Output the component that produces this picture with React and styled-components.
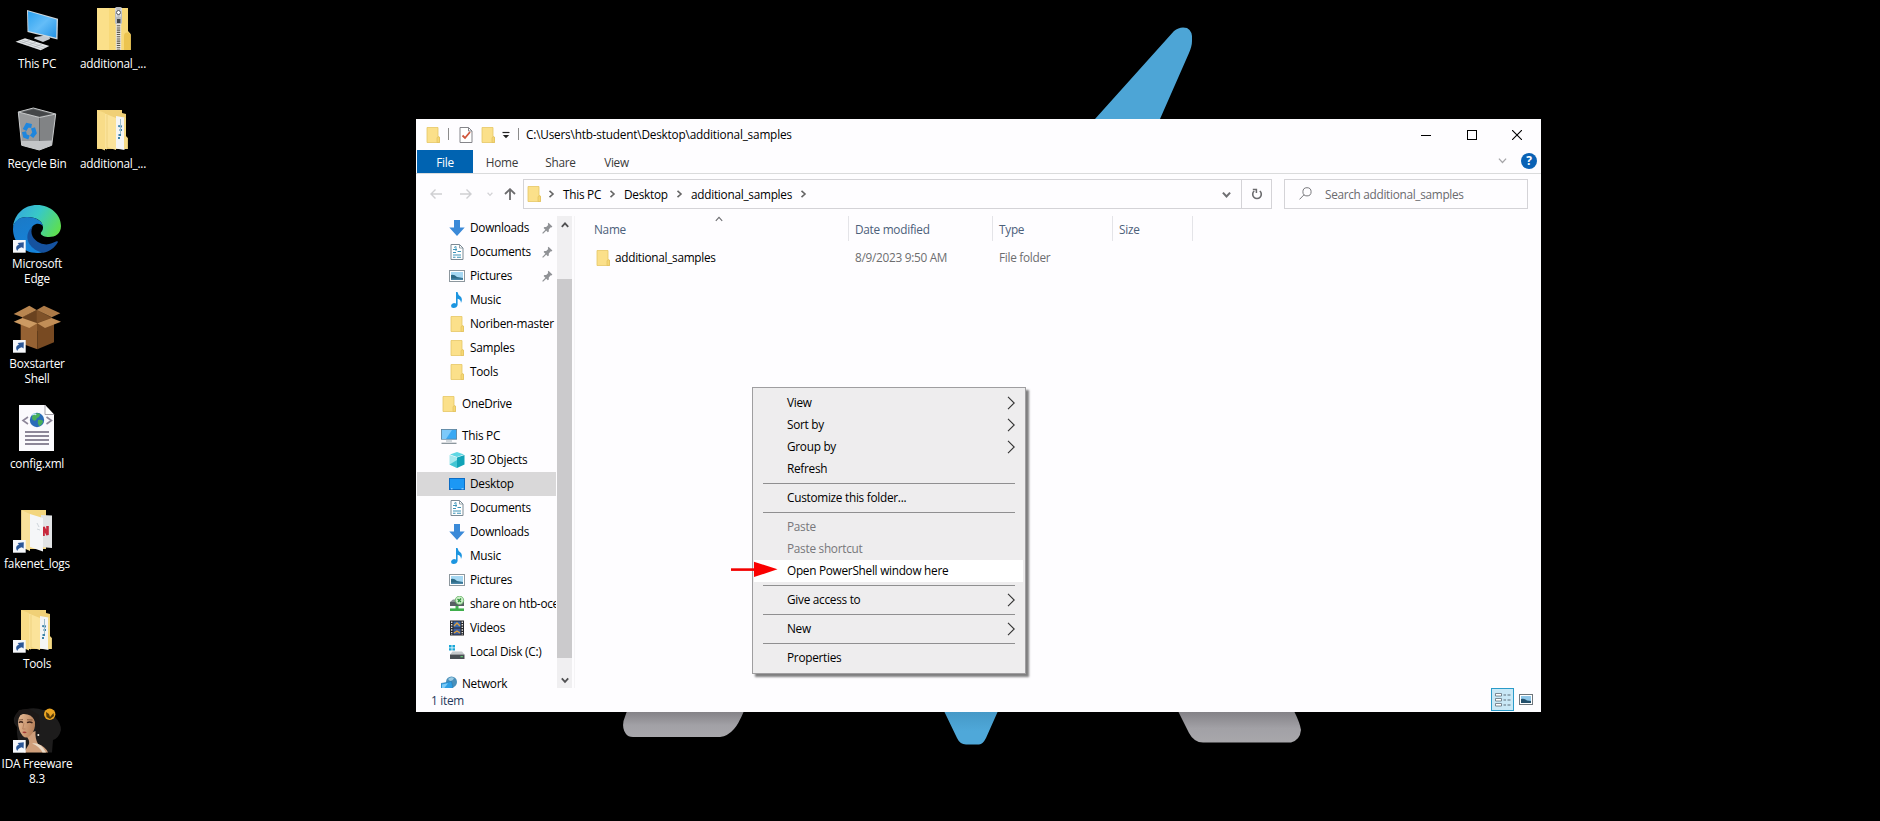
import React from "react";
import styled, { createGlobalStyle, css } from "styled-components";

const GlobalStyle = createGlobalStyle`
  * { box-sizing: border-box; }
  html, body { margin: 0; padding: 0; background: #000; overflow: hidden; }
  body {
    font-family: "Open Sans", "Noto Sans", "Liberation Sans", sans-serif;
    font-size: 11.8px;
    letter-spacing: -0.26px;
    color: #000;
  }
  svg { display: block; flex: none; }
`;

/* ---------- desktop ---------- */

const Desktop = styled.main`
  position: relative;
  width: 1880px;
  height: 821px;
  overflow: hidden;
  background: #000;
`;

const Wallpaper = styled.svg`
  position: absolute;
  inset: 0;
`;

const IconGrid = styled.div`
  position: relative;
  display: grid;
  grid-template-rows: repeat(8, 100px);
  grid-auto-columns: 76px;
  grid-auto-flow: column;
  width: max-content;
  margin-left: -1px;
`;

const Shortcut = styled.div`
  grid-column: ${(p) => p.$col};
  grid-row: ${(p) => p.$row};
  display: flex;
  flex-direction: column;
  align-items: center;
  padding-top: 5px;
  gap: 3px;
`;

const ShortcutLabel = styled.span`
  width: 76px;
  color: #fff;
  line-height: 15px;
  text-align: center;
  letter-spacing: -0.24px;
  text-shadow: 0 1px 2px #000;
  white-space: pre;
`;

const Badge = () => (
  <g>
    <rect x="0" y="35" width="12.7" height="12.7" fill="#f6f8fb" />
    <path d="M4.2 46 C2.2 43 3.4 40.4 6 39.6 L4.6 37.9 L10.8 37.2 L10.6 43.6 L8.8 42.2 C6.6 42.6 5.2 43.8 4.2 46Z" fill="#2b5797" />
  </g>
);

const Ico = ({ children, link }) => (
  <svg width="48" height="48" viewBox="0 0 48 48">
    {children}
    {link && <Badge />}
  </svg>
);

const PcIcon = () => (
  <Ico>
    <defs>
      <linearGradient id="scr" x1="0" y1="0" x2="1" y2="1">
        <stop offset="0" stopColor="#2aa1f0" />
        <stop offset=".5" stopColor="#64bdf8" />
        <stop offset="1" stopColor="#2393e6" />
      </linearGradient>
    </defs>
    <path d="M22 32 L36 30 L37 34 L30 37 L21 33.5Z" fill="#c4cad0" />
    <path d="M14 5 L45 13.8 L44.5 34.5 L14.5 27Z" fill="#cfd8de" />
    <path d="M15 6.2 L43.6 14.5 L43.2 32.8 L15.4 26Z" fill="url(#scr)" />
    <path d="M12 33.3 L36.3 41 L27.7 45.3 L2.5 36.8Z" fill="#e3e6e8" />
    <path d="M9 35 L33 42.6 M6 36 L30 44 M17 35 L8 38.5 M23 37 L14 40.6 M29 39 L20 42.6" stroke="#a8adb2" strokeWidth=".6" />
  </Ico>
);

const ZipIcon = () => (
  <Ico>
    <path d="M8 3 H39 V26 L41.7 29 V45 H8Z" fill="#f8d978" />
    <path d="M8 3 H20 V45 H8Z" fill="#fbe08a" />
    <path d="M35 45 V31 Q35 27.5 38 27.5 H39.5 L41.7 30 V45Z" fill="#ecc450" />
    <path d="M29.5 18 V45" stroke="#e8e4da" strokeWidth="5.4" />
    <path d="M29.5 18 V45" stroke="#5b564a" strokeWidth="3.4" strokeDasharray="1.1 1.1" />
    <rect x="26" y="2" width="7" height="17" rx="1.5" fill="#b9bcc0" />
    <path d="M26.6 3 L28 12 M32.4 3 L31 12" stroke="#e6e8ea" strokeWidth="1" />
    <circle cx="29.5" cy="7.5" r="2" fill="#fff" stroke="#55585c" strokeWidth="1" />
    <rect x="28" y="14" width="3.4" height="4" fill="#3f4246" />
  </Ico>
);

const BinIcon = () => (
  <Ico>
    <path d="M5.3 7 L20.3 3 L42.7 9 L26.5 12.5Z" fill="#5e6163" />
    <path d="M8 7.6 L20.5 4.4 L38 9 L26 11.4Z" fill="#444648" />
    <path d="M5.3 7 L26.5 12.5 L26.3 45 L8.7 40.3Z" fill="#989a9c" />
    <path d="M42.7 9 L26.5 12.5 L26.3 45 L38.7 40.3Z" fill="#818385" />
    <path d="M8.2 36 L26.4 36 L38.9 35.5 L38.7 40.3 L26.3 45 L8.7 40.3Z" fill="#c3c5c7" />
    <path d="M5.3 7 L20.3 3 L42.7 9 L26.5 12.5Z M5.3 7 L8.7 40.3 L26.3 45 L38.7 40.3 L42.7 9" fill="none" stroke="#c9cbcc" strokeWidth="1" />
    <g fill="none" stroke="#1f86dd" strokeWidth="4.2">
      <path d="M11.6 25 L14.3 20.2 L18.6 21" />
      <path d="M20 22.8 L21.6 27.8 L18.6 31.8" />
      <path d="M16 32.4 L12 31 L11 26.8" />
    </g>
  </Ico>
);

const OpenFolder = () => (
  <g>
    <path d="M8 5 H33 V8 L37 9 V31 L38.7 33 V44 H8Z" fill="#f0d077" />
    <path d="M27 11 L35.5 12.5 V45 L27 43.5Z" fill="#f4f5f5" />
    <path d="M29.2 21 L33 21.5 M30.5 25 H33 M29.5 30 H32 M29 33 H31" stroke="#3c83a8" strokeWidth="1.8" />
    <path d="M31.5 14 V29" stroke="#9dbccb" />
    <path d="M35 13 L37 13 V32 L38.7 33 V44 L35 44Z" fill="#f5da86" />
    <path d="M8 5.5 L27 13 V45 L18 42 V44.5 L8 40.5Z" fill="#fbe39a" />
    <path d="M18 10 V43" stroke="#edcf7b" strokeWidth=".8" />
    <path d="M8 5 L16 8 V45.5 L8 42Z" fill="#f8dc88" />
  </g>
);

const EdgeIcon = () => (
  <Ico link>
    <defs>
      <linearGradient id="eg" x1="0" y1=".3" x2="1" y2=".7">
        <stop offset="0" stopColor="#35a9dc" />
        <stop offset=".45" stopColor="#38c9c6" />
        <stop offset="1" stopColor="#5fdf4d" />
      </linearGradient>
      <linearGradient id="eb" x1="0" y1="0" x2=".4" y2="1">
        <stop offset="0" stopColor="#1b79c5" />
        <stop offset="1" stopColor="#1583da" />
      </linearGradient>
    </defs>
    <path d="M0 22 C1.5 9 11 0 24 0 C38 0 48 10 48 21 C48 29 42 32 36 32 C32 32 27.5 30.5 27.8 28 C28 26.8 30 26 30 22.5 C30 16 23 12 14 12 C6 12 1.5 17 0 22Z" fill="url(#eg)" />
    <path d="M0 24 C0 16.5 6 12 14 12 C23 12 29 16 30 21 C26 17 19 18.5 17.5 26 C16 36 23 45 32 46.6 C29 48 26 48 24 48 C10 48 0 37 0 24Z" fill="url(#eb)" />
    <path d="M19.5 22 C16.5 28 20 35 27 38 C34 41 39 38.5 43.5 36.3 C44.5 36 45.3 36.6 44.7 37.6 C41.5 43 36 47 30.5 47.7 C20 46 12 37 15 28 C16 25 17.5 23 19.5 22Z" fill="#15529f" />
  </Ico>
);

const BoxIcon = () => (
  <Ico link>
    <path d="M9 12 L23.7 5 L38.7 12.3 L38.7 20 L24.3 26 L9 20Z" fill="#6a421f" />
    <path d="M23.7 5 V18 L38.7 13Z" fill="#7f5229" />
    <path d="M.7 9 L16.3 .7 L23.7 5 L9.3 12.3Z" fill="#b98650" />
    <path d="M23.7 5 L31 .7 L47.3 8.3 L38.7 12.3Z" fill="#ad7a47" />
    <path d="M7.7 18 L24.3 18.3 V44.3 L7.7 38.3Z" fill="#966233" />
    <path d="M24.3 18.3 L41 18 V37.3 L24.3 44.3Z" fill="#784a22" />
    <path d="M.7 16.7 L9.3 13 L24.3 18.3 L16.3 23Z" fill="#cc9a62" />
    <path d="M24.3 18.3 L38.7 13 L48 16.7 L32 23Z" fill="#c28e57" />
  </Ico>
);

const XmlIcon = () => (
  <Ico>
    <path d="M6 0 H32 L41 9.5 V46 H6Z" fill="#fbfafd" />
    <path d="M32 0 V9.5 H41" fill="#fff" stroke="#8f8b96" strokeWidth=".8" />
    <path d="M15 12 L10 15.5 L15 19 M33.5 12 L38.5 15.5 L33.5 19" fill="none" stroke="#8d8699" strokeWidth="1.6" />
    <circle cx="24" cy="15" r="7.2" fill="#2a6cb8" />
    <path d="M20 10 Q24 7 27 9 Q27 12 24 13 Q23 17 20 15 Q18 13 20 10Z M25 15 Q30 14 30 17 Q28 21 26 21 Q24 18 25 15Z" fill="#49b05a" />
    <path d="M19 10 Q22 8 23 10" stroke="#bfe6f5" strokeWidth="1.4" fill="none" />
    <path d="M12 27 H36 M12 31 H36 M12 35 H36 M12 39 H36" stroke="#8d8798" strokeWidth="1.8" />
  </Ico>
);

const LogsIcon = () => (
  <Ico link>
    <path d="M8.3 5 H33 V44 H8.3Z" fill="#f3d67f" />
    <path d="M28 10 L39 10.5 V43 L28 42Z" fill="#e2e4e6" />
    <path d="M30.5 31 V22 L34.5 30 V21" fill="none" stroke="#c8283c" strokeWidth="2.6" />
    <path d="M17 9 L30 13 V46.5 L17 42Z" fill="#f5f6f8" />
    <path d="M24 18 L26 22 M24 24 L27 25" stroke="#cfd5da" />
    <path d="M8.3 5 L17 9 V46 L8.3 42Z" fill="#fae29a" />
  </Ico>
);

const IdaIcon = () => (
  <Ico link>
    <defs>
      <linearGradient id="skin" x1="0" y1="0" x2="1" y2=".3">
        <stop offset="0" stopColor="#e8bd98" />
        <stop offset="1" stopColor="#b9825c" />
      </linearGradient>
    </defs>
    <path d="M1 13 Q4 4 14 4 Q22 2 30 5 Q38 4 42 12 Q48 18 48 25 Q46 33 40 35 L39 47.5 H8 Q3 30 4 22 Q0 18 1 13Z" fill="#1d1c1c" />
    <path d="M12.5 30 Q17 35 16 39 L11 47.5 H35 Q32 41 25 39 Q22 34 22.5 26Z" fill="#cf9f7b" />
    <path d="M5 17 Q6 7.5 13 8 Q20.5 8.5 22 17 Q22.5 25 18 30 Q13.5 34.5 9.8 31 Q5.4 26 5 17Z" fill="url(#skin)" />
    <path d="M5.8 17.6 Q8 16 10 17.6 M14 17.6 Q17 16 19.5 18" stroke="#3b2118" strokeWidth="1.5" fill="none" />
    <path d="M6 15 L10 14.6 M14 14.8 L19.5 15" stroke="#6d4630" strokeWidth=".8" />
    <path d="M11 18 L9.7 24 H12.5" stroke="#b5805e" strokeWidth=".9" fill="none" />
    <path d="M9.2 27 Q11.5 26 13.8 27.3 Q11.5 29.3 9.2 27Z" fill="#a23a36" />
    <path d="M3 20 Q4 10 10 9 Q18 8.5 21.5 15 Q23.5 20 23 30 L27 26 L26 10 L16 4 L6 5 L2 12Z" fill="#1c1817" />
    <circle cx="25.3" cy="30" r="1" fill="#f4f0e6" />
    <path d="M19 38.5 Q28 37 33 47.5 H29.5 Q26 41 19 38.5Z" fill="#eadac6" />
    <circle cx="36.7" cy="9.3" r="5.7" fill="#e9a423" />
    <path d="M33 7 L36 9 L37 12 L40.5 8 L41 11 L37 14 L33.5 12Z" fill="#543907" />
  </Ico>
);

const SHORTCUTS = [
  { label: "This PC", icon: <PcIcon />, col: 1, row: 1 },
  { label: "Recycle Bin", icon: <BinIcon />, col: 1, row: 2 },
  { label: "Microsoft\nEdge", icon: <EdgeIcon />, col: 1, row: 3 },
  { label: "Boxstarter\nShell", icon: <BoxIcon />, col: 1, row: 4 },
  { label: "config.xml", icon: <XmlIcon />, col: 1, row: 5 },
  { label: "fakenet_logs", icon: <LogsIcon />, col: 1, row: 6 },
  { label: "Tools", icon: <Ico link><OpenFolder /></Ico>, col: 1, row: 7 },
  { label: "IDA Freeware\n8.3", icon: <IdaIcon />, col: 1, row: 8 },
  { label: "additional_...", icon: <ZipIcon />, col: 2, row: 1 },
  { label: "additional_...", icon: <Ico><OpenFolder /></Ico>, col: 2, row: 2 },
];

/* ---------- small icons ---------- */

const Small = ({ children }) => (
  <svg width="16" height="16" viewBox="0 0 16 16">{children}</svg>
);

const Folder = () => (
  <Small>
    <path d="M2 .5 H13 V9.5 L14.5 10 V15.5 H2Z" fill="#fbe08a" stroke="#e6c665" strokeWidth=".8" />
    <path d="M12 15.5 V11 Q12.2 9.8 13.3 9.8 L14.5 10.5 V15.5Z" fill="#f6d874" stroke="#dfbe5c" strokeWidth=".6" />
  </Small>
);
const Downloads = () => (
  <Small><path d="M5 0 H11 V7.5 H15.7 L8 16 L.3 7.5 H5Z" fill="#3b8ad8" /></Small>
);
const Documents = () => (
  <Small>
    <path d="M2 .5 H10.5 L14 4 V15.5 H2Z" fill="#fff" stroke="#7b8a94" />
    <path d="M10.5 .5 V4 H14" fill="none" stroke="#7b8a94" strokeWidth=".8" />
    <path d="M4 5.5 H8 M4 8.5 H7 M8.5 7.5 H12 M4 11 H12 M4 13.3 H6.5 M8 13.3 H12" stroke="#3c94b8" strokeWidth="1.1" />
    <path d="M5 3.5 L7 2.5 V7" stroke="#3c94b8" strokeWidth=".9" fill="none" />
  </Small>
);
const Pictures = () => (
  <Small>
    <rect x=".5" y="2.5" width="15" height="11" fill="#fff" stroke="#8d979e" />
    <rect x="2" y="4" width="12" height="8" fill="#a6d8f3" />
    <path d="M2 7 Q5 6 8 9 L14 10 V12 H2Z" fill="#2d6a86" />
    <path d="M2 10.5 H14 V12 H2Z" fill="#4a86a8" />
  </Small>
);
const Music = () => (
  <Small>
    <path d="M7 0 H8.5 Q9 3 11.5 4.5 Q14 7 12 11 Q12 7.5 8.6 6.8 V13 Q8 16 4.5 16 Q2 16 2 13.8 Q2.2 11.5 5 11 Q6.2 11 7 11.4Z" fill="#1c95e0" />
  </Small>
);
const Monitor = () => (
  <Small>
    <rect x=".4" y="1.4" width="15.2" height="9.8" fill="#3aa9f4" stroke="#5d7f98" strokeWidth=".8" />
    <path d="M1 2 H11 L5 11 H1Z" fill="#7cc9fa" />
    <path d="M5 13 H11" stroke="#a4b2ba" />
    <path d="M.5 15.3 H15.5" stroke="#7f8c94" strokeWidth="1.2" />
  </Small>
);
const Objects3d = () => (
  <Small>
    <path d="M8 0 L15 2.5 L8 5 L1 2.5Z" fill="#5fd7e3" />
    <path d="M.5 3 L8 5.5 V16 L.5 12.5Z" fill="#a5e8ee" />
    <path d="M8 5.5 L15.5 3 V12.5 L8 16Z" fill="#11a3b7" />
    <path d="M.5 12.5 L8 8 L8 16Z" fill="#43c6d4" />
  </Small>
);
const DesktopIcon = () => (
  <Small>
    <rect x=".5" y="2.5" width="15" height="11" fill="#1c98f5" stroke="#0c6cc4" />
    <path d="M2 12.8 H3.5 M12.5 12.8 H14.5" stroke="#d6edff" strokeWidth=".8" />
  </Small>
);
const Share = () => (
  <Small>
    <path d="M1 6 L4 3.5 H13 L15 6 V9.5 H1Z" fill="#8c9396" />
    <rect x="1" y="6" width="14" height="4" fill="#585f63" />
    <circle cx="10.5" cy="4.3" r="4.2" fill="#cdeec9" stroke="#5fae60" strokeWidth=".8" />
    <path d="M8.5 3 L12 6 M9 6 L12 2.5" stroke="#2d8f3a" strokeWidth="1.2" />
    <path d="M8 10 V13" stroke="#48b354" strokeWidth="3" />
    <path d="M1 13.7 H15" stroke="#3fae4c" strokeWidth="2.6" />
  </Small>
);
const Videos = () => (
  <Small>
    <rect x="1" y=".5" width="14" height="15" fill="#26272b" />
    <path d="M2.7 1.5 V15 M13.3 1.5 V15" stroke="#e2e2e2" strokeWidth="1.4" strokeDasharray="1.4 1.2" />
    <rect x="4.5" y="1.5" width="7" height="6" fill="#3668b2" />
    <rect x="4.5" y="8.5" width="7" height="6" fill="#3f5fa0" />
    <path d="M5 6 L8 3 L11 6 M5 13 L8 11 L11 13" stroke="#e0a13a" strokeWidth="1.4" fill="none" />
  </Small>
);
const Disk = () => (
  <Small>
    <path d="M0 1 H2.6 V3.4 H0Z M3.4 1 H6 V3.4 H3.4Z M0 4.2 H2.6 V6.6 H0Z M3.4 4.2 H6 V6.6 H3.4Z" fill="#19a7d8" />
    <path d="M1 10.5 L3.5 7.5 H13 L15.5 10.5Z" fill="#c5c9cc" />
    <rect x="1" y="10.5" width="14.5" height="4.5" fill="#4a4f54" />
    <rect x="11.5" y="12.2" width="2.4" height="1" fill="#66e07a" />
  </Small>
);
const Network = () => (
  <Small>
    <circle cx="10.5" cy="6" r="5.5" fill="#4a8fb9" />
    <path d="M7 3 Q10 0 13 2 Q12 5 9 5Z" fill="#9ccbe4" />
    <path d="M0 7.5 L10.5 5.5 L12 12 L0 13.5Z" fill="#2f9fe4" stroke="#2678b2" strokeWidth=".6" />
    <path d="M1 8.5 L7 7.3 L3 12.5 H1Z" fill="#7ecbf7" />
  </Small>
);

const Chevron = ({ size = 8, dir = "right", color = "#666", weight = 1.6 }) => {
  const d = {
    right: "M2.5 .8 L6 4 L2.5 7.2",
    down: "M.8 2.3 L4 5.8 L7.2 2.3",
    up: "M.8 5.8 L4 2.3 L7.2 5.8",
  }[dir];
  return (
    <svg width={size} height={size} viewBox="0 0 8 8">
      <path d={d} fill="none" stroke={color} strokeWidth={(weight * 8) / size} />
    </svg>
  );
};

/* ---------- explorer window ---------- */

const Window = styled.section`
  position: absolute;
  left: 416px;
  top: 119px;
  width: 1125px;
  height: 593px;
  display: flex;
  flex-direction: column;
  background: #fefdff;
`;

const TitleBar = styled.header`
  height: 31px;
  display: flex;
  align-items: center;
  padding-left: 9px;
`;

const QuickDivider = styled.i`
  width: 1px;
  height: 12px;
  margin: 0 ${(p) => p.$after}px 2px ${(p) => p.$before}px;
  background: #8b8b8b;
`;

const TitleText = styled.h1`
  margin: 0 auto 0 0;
  padding-bottom: 2px;
  font-size: inherit;
  font-weight: 400;
  letter-spacing: -0.2px;
`;

const QuickItem = styled.span`
  display: flex;
  margin-right: ${(p) => p.$gap}px;
`;

const Captions = styled.div`
  display: flex;
  padding-right: 1px;
`;

const Caption = styled.button`
  width: 45.5px;
  height: 31px;
  display: flex;
  align-items: center;
  justify-content: center;
  border: 0;
  padding: 0;
  background: none;
`;

const Ribbon = styled.nav`
  height: 24px;
  display: flex;
  border-bottom: 1px solid #dadbdc;
  padding: 0 4px 0 1px;
  align-items: stretch;
`;

const Tab = styled.button`
  width: ${(p) => p.$w}px;
  border: 0;
  padding: 1px 0 0;
  font: inherit;
  letter-spacing: inherit;
  line-height: 22px;
  background: none;
  color: #3a3a3a;
  ${(p) => p.$active && css`
    background: #0063b1;
    color: #fff;
  `}
`;

const RibbonTools = styled.div`
  display: flex;
  align-items: center;
  gap: 14px;
  margin-left: auto;
  padding-bottom: 2px;
`;

const Help = styled.span`
  width: 16px;
  height: 16px;
  border-radius: 50%;
  background: #0a62b5;
  color: #fff;
  font-weight: 700;
  font-size: 12px;
  line-height: 16px;
  text-align: center;
  letter-spacing: 0;
`;

const AddressRow = styled.div`
  height: 42px;
  flex: none;
  display: flex;
  align-items: flex-start;
  padding: 5px 13px 0 14px;
`;

const NavButtons = styled.div`
  width: 93px;
  height: 30px;
  display: flex;
  align-items: center;
`;

const NavButton = styled.span`
  display: flex;
  margin-right: ${(p) => p.$gap}px;
`;

const Field = styled.div`
  height: 30px;
  display: flex;
  align-items: center;
  border: 1px solid #d4d3d7;
`;

const AddressField = styled(Field)`
  width: 749px;
  padding-left: 2px;
`;

const Crumbs = styled.div`
  flex: 1;
  display: flex;
  align-items: center;
  padding: 0 0 1px 5px;
`;

const Crumb = styled.span`
  width: ${(p) => p.$w}px;
  margin-left: 8px;
  margin-right: 7px;
  white-space: nowrap;
`;

const Refresh = styled.div`
  width: 30px;
  height: 28px;
  margin-left: 10px;
  display: flex;
  align-items: center;
  justify-content: center;
  border-left: 1px solid #d4d3d7;
`;

const SearchField = styled(Field)`
  width: 244px;
  margin-left: 12px;
  padding: 0 0 1px 14px;
  gap: 13px;
  color: #6a6a6e;
  letter-spacing: -0.3px;
`;

const Body = styled.div`
  flex: 1;
  min-height: 0;
  display: flex;
`;

const Sidebar = styled.aside`
  width: 140px;
  overflow: hidden;
  display: flex;
  flex-direction: column;
  padding-left: 1px;
`;

const TreeItem = styled.div`
  flex: none;
  height: 24px;
  display: flex;
  align-items: center;
  padding-left: ${(p) => (p.$root ? 24 : 32)}px;
  padding-right: 3px;
  margin-top: ${(p) => (p.$root ? 8 : 0)}px;
  gap: 5px;
  white-space: nowrap;
  background: ${(p) => (p.$selected ? "#d9d8d9" : "transparent")};
`;

const TreeName = styled.span`
  flex: 1;
  line-height: 16px;
  padding-bottom: 2px;
  letter-spacing: -0.26px;
`;

const ScrollBar = styled.div`
  width: 15px;
  margin-left: 1px;
  display: flex;
  flex-direction: column;
  background: #f0eff1;
`;

const ScrollButton = styled.span`
  height: 17px;
  display: flex;
  align-items: center;
  justify-content: center;
`;

const ScrollTrack = styled.div`
  flex: 1;
  padding: 46px 0 13px;
`;

const ScrollThumb = styled.div`
  height: 100%;
  background: #cbcacc;
`;

const FilePane = styled.div`
  flex: 1;
  margin-left: 2px;
  border-left: 1px solid #f5f4f6;
  padding-left: 4px;
`;

const Columns = styled.div`
  display: grid;
  grid-template-columns: 270px 144px 120px 80px;
`;

const HeaderCell = styled.div`
  position: relative;
  height: 25px;
  line-height: 26px;
  padding-left: ${(p) => p.$pad ?? 6}px;
  border-right: 1px solid #e4e4e8;
  color: #4c607a;
`;

const SortMark = styled.span`
  position: absolute;
  left: 136px;
  top: -1px;
`;

const Cell = styled.div`
  height: 33px;
  display: flex;
  align-items: center;
  gap: 4px;
  padding-left: ${(p) => p.$pad ?? 6}px;
  color: ${(p) => (p.$muted ? "#6d6d6f" : "#000")};
  letter-spacing: -0.28px;
`;

const CellText = styled.span`
  padding-bottom: 2px;
`;

const StatusBar = styled.footer`
  height: 24px;
  flex: none;
  display: flex;
  align-items: center;
  padding: 0 4px 0 15px;
  color: #1e395b;
`;

const ItemCount = styled.span`
  padding-bottom: 1px;
`;

const ViewSwitch = styled.div`
  margin-left: auto;
  display: flex;
  align-items: center;
  padding-bottom: 1px;
`;

const ViewButton = styled.span`
  width: 23px;
  height: 23px;
  display: flex;
  align-items: center;
  justify-content: center;
  ${(p) => p.$active && css`
    border: 1px solid #2a9bc9;
    background: #c9e8f6;
  `}
`;

/* ---------- context menu ---------- */

const Menu = styled.div`
  position: absolute;
  left: 752px;
  top: 387px;
  width: 274px;
  height: 287px;
  padding: 4px 2px 4px 1px;
  border: 1px solid #9f9ea0;
  background: #eeedee;
  box-shadow: 3px 3px 2px rgba(0, 0, 0, 0.5);
  clip-path: inset(0 -8px -8px 0);
`;

const MenuItem = styled.div`
  height: 22px;
  display: flex;
  align-items: center;
  justify-content: space-between;
  padding: 0 4px 0 33px;
  color: ${(p) => (p.$disabled ? "#77777a" : "#000")};
  background: ${(p) => (p.$hover ? "#fff" : "transparent")};
`;

const MenuLabel = styled.span`
  padding-bottom: 2px;
  letter-spacing: -0.27px;
`;

const Separator = styled.hr`
  height: 1px;
  margin: 3px 8px 3px 9px;
  border: 0;
  background: #8f8f90;
`;

const Pointer = styled.svg`
  position: absolute;
  left: 731px;
  top: 561px;
`;

const TREE = [
  { name: "Downloads", icon: <Downloads />, pin: true },
  { name: "Documents", icon: <Documents />, pin: true },
  { name: "Pictures", icon: <Pictures />, pin: true },
  { name: "Music", icon: <Music /> },
  { name: "Noriben-master", icon: <Folder /> },
  { name: "Samples", icon: <Folder /> },
  { name: "Tools", icon: <Folder /> },
  { name: "OneDrive", icon: <Folder />, root: true },
  { name: "This PC", icon: <Monitor />, root: true },
  { name: "3D Objects", icon: <Objects3d /> },
  { name: "Desktop", icon: <DesktopIcon />, selected: true },
  { name: "Documents", icon: <Documents /> },
  { name: "Downloads", icon: <Downloads /> },
  { name: "Music", icon: <Music /> },
  { name: "Pictures", icon: <Pictures /> },
  { name: "share on htb-oce", icon: <Share /> },
  { name: "Videos", icon: <Videos /> },
  { name: "Local Disk (C:)", icon: <Disk /> },
  { name: "Network", icon: <Network />, root: true },
];

const MENU = [
  { label: "View", sub: true },
  { label: "Sort by", sub: true },
  { label: "Group by", sub: true },
  { label: "Refresh" },
  null,
  { label: "Customize this folder..." },
  null,
  { label: "Paste", disabled: true },
  { label: "Paste shortcut", disabled: true },
  { label: "Open PowerShell window here", hover: true },
  null,
  { label: "Give access to", sub: true },
  null,
  { label: "New", sub: true },
  null,
  { label: "Properties" },
];

const Pin = () => (
  <svg width="11" height="12" viewBox="0 0 11 12">
    <path d="M6.5 .8 L10.4 4.6 L9.4 5.4 L8.8 5.2 L6.8 7.4 L6.8 9.4 L5.8 10.2 L1.6 6 L2.4 5 H4.2 L6.2 3 L5.8 1.8Z" fill="#909296" />
    <path d="M4 8 L.6 11.4" stroke="#909296" strokeWidth="1.2" />
  </svg>
);

const Arrow = ({ d, color, weight = 1.4 }) => (
  <svg width="12" height="12" viewBox="0 0 12 12">
    <path d={d} fill="none" stroke={color} strokeWidth={weight} />
  </svg>
);

const Background = () => (
  <Wallpaper width="1880" height="821" viewBox="0 0 1880 821">
    <defs>
      <linearGradient id="grey" x1="0" y1="0" x2="0" y2="1">
        <stop offset="0" stopColor="#828085" />
        <stop offset=".55" stopColor="#a2a1a6" />
        <stop offset="1" stopColor="#a8a7ab" />
      </linearGradient>
      <linearGradient id="blue" x1="0" y1="0" x2="0" y2="1">
        <stop offset="0" stopColor="#4598c6" />
        <stop offset=".6" stopColor="#4fa8d9" />
      </linearGradient>
    </defs>
    <path d="M1095 119 L1174 31 Q1180 26 1187 28 Q1193 31 1192 41 Q1192 46 1189 53 L1160 119Z" fill="#4da5d6" />
    <path d="M627 711 L623.5 721 Q622 729 626 734 Q628 737 633 737 H720 Q728 736 734 729 Q738 725 744 711Z" fill="url(#grey)" />
    <path d="M944 711 L957 738 Q960 744.5 966 744.5 H979 Q983 744 986 738 L998 711Z" fill="url(#blue)" />
    <path d="M1178 711 L1189 733 Q1194 742.5 1203 742.5 H1291 Q1300 740 1301 730 Q1300 723 1294 711Z" fill="url(#grey)" />
  </Wallpaper>
);

export default function App() {
  return (
    <>
      <GlobalStyle />
      <Desktop>
        <Background />
        <IconGrid>
          {SHORTCUTS.map((s, i) => (
            <Shortcut key={i} $col={s.col} $row={s.row}>
              {s.icon}
              <ShortcutLabel>{s.label}</ShortcutLabel>
            </Shortcut>
          ))}
        </IconGrid>

        <Window>
          <TitleBar>
            <Folder />
            <QuickDivider $before={7} $after={10} />
            <QuickItem $gap={7}>
              <svg width="14" height="16" viewBox="0 0 14 16">
                <path d="M1 .5 H9.5 L13 4 V15.5 H1Z" fill="#fff" stroke="#85858a" />
                <path d="M9.5 .5 V4 H13" fill="none" stroke="#85858a" />
                <path d="M3.5 8.5 L6 11 L11 5" fill="none" stroke="#d0553a" strokeWidth="1.8" />
              </svg>
            </QuickItem>
            <QuickItem $gap={6}><Folder /></QuickItem>
            <QuickItem $gap={0}>
              <svg width="8" height="8" viewBox="0 0 8 8">
                <path d="M.5 1.5 H7.5" stroke="#222" strokeWidth="1.2" />
                <path d="M.8 4 H7.2 L4 7.2Z" fill="#222" />
              </svg>
            </QuickItem>
            <QuickDivider $before={8} $after={7} />
            <TitleText>C:\Users\htb-student\Desktop\additional_samples</TitleText>
            <Captions>
              <Caption aria-label="Minimize">
                <svg width="10" height="10"><path d="M0 5.5 H10" stroke="#000" /></svg>
              </Caption>
              <Caption aria-label="Maximize">
                <svg width="10" height="10"><rect x=".5" y=".5" width="9" height="9" fill="none" stroke="#000" /></svg>
              </Caption>
              <Caption aria-label="Close">
                <svg width="10" height="10"><path d="M0 0 L10 10 M10 0 L0 10" stroke="#000" strokeWidth="1.1" /></svg>
              </Caption>
            </Captions>
          </TitleBar>

          <Ribbon>
            <Tab $w={56} $active>File</Tab>
            <Tab $w={58}>Home</Tab>
            <Tab $w={59}>Share</Tab>
            <Tab $w={53}>View</Tab>
            <RibbonTools>
              <Chevron dir="down" size={9} color="#a5a5a8" weight={1.2} />
              <Help>?</Help>
            </RibbonTools>
          </Ribbon>

          <AddressRow>
            <NavButtons>
              <NavButton $gap={18}><Arrow d="M12 6 H1 M5.5 1.5 L1 6 L5.5 10.5" color="#cfcfd2" /></NavButton>
              <NavButton $gap={15}><Arrow d="M0 6 H11 M6.5 1.5 L11 6 L6.5 10.5" color="#cfcfd2" /></NavButton>
              <NavButton $gap={11}><Chevron dir="down" size={6} color="#d2d2d5" weight={1.2} /></NavButton>
              <NavButton $gap={0}><Arrow d="M6 12 V1.2 M1 6 L6 1.2 L11 6" color="#6c6c6e" weight={1.8} /></NavButton>
            </NavButtons>
            <AddressField>
              <Folder />
              <Crumbs>
                <Chevron />
                <Crumb $w={38}>This PC</Crumb>
                <Chevron />
                <Crumb $w={44}>Desktop</Crumb>
                <Chevron />
                <Crumb $w={101}>additional_samples</Crumb>
                <Chevron />
              </Crumbs>
              <Chevron dir="down" size={9} color="#6f6f72" weight={2} />
              <Refresh>
                <svg width="12" height="12" viewBox="0 0 12 12">
                  <path d="M3.2 3 A4.3 4.3 0 1 0 8.8 3" fill="none" stroke="#6b6b6e" strokeWidth="1.6" />
                  <path d="M1.8 1.5 H5.4 V5" fill="none" stroke="#6b6b6e" strokeWidth="1.5" />
                </svg>
              </Refresh>
            </AddressField>
            <SearchField>
              <svg width="13" height="13" viewBox="0 0 13 13">
                <circle cx="8" cy="4.8" r="4.1" fill="none" stroke="#7a7a7e" />
                <path d="M5 7.8 L.5 12.4" stroke="#7a7a7e" />
              </svg>
              <span>Search additional_samples</span>
            </SearchField>
          </AddressRow>

          <Body>
            <Sidebar>
              {TREE.map((t, i) => (
                <TreeItem key={i} $root={t.root} $selected={t.selected}>
                  {t.icon}
                  <TreeName>{t.name}</TreeName>
                  {t.pin && <Pin />}
                </TreeItem>
              ))}
            </Sidebar>
            <ScrollBar>
              <ScrollButton><Chevron dir="up" color="#505052" weight={1.8} /></ScrollButton>
              <ScrollTrack><ScrollThumb /></ScrollTrack>
              <ScrollButton><Chevron dir="down" color="#505052" weight={1.8} /></ScrollButton>
            </ScrollBar>
            <FilePane>
              <Columns>
                <HeaderCell $pad={15}>
                  Name
                  <SortMark><Chevron dir="up" color="#6c6c70" weight={1.1} /></SortMark>
                </HeaderCell>
                <HeaderCell>Date modified</HeaderCell>
                <HeaderCell>Type</HeaderCell>
                <HeaderCell>Size</HeaderCell>
                <Cell $pad={16}><Folder /><CellText>additional_samples</CellText></Cell>
                <Cell $muted><CellText>8/9/2023 9:50 AM</CellText></Cell>
                <Cell $muted><CellText>File folder</CellText></Cell>
              </Columns>
            </FilePane>
          </Body>

          <StatusBar>
            <ItemCount>1 item</ItemCount>
            <ViewSwitch>
              <ViewButton $active>
                <svg width="16" height="14" viewBox="0 0 16 14">
                  <path d="M.5 .5 H6.5 V3 H.5Z M.5 5.5 H6.5 V8 H.5Z M.5 10.5 H6.5 V13 H.5Z" fill="#fff" stroke="#5f6f7a" strokeWidth=".8" />
                  <path d="M8.5 2 H11 M12.5 2 H15.5 M8.5 7 H11 M12.5 7 H15.5 M8.5 12 H11 M12.5 12 H15.5" stroke="#5f6f7a" />
                </svg>
              </ViewButton>
              <ViewButton>
                <svg width="14" height="11" viewBox="0 0 14 11">
                  <rect x=".5" y=".5" width="13" height="10" fill="#fff" stroke="#6d757b" />
                  <rect x="2" y="2" width="10" height="7" fill="#8fc6e8" />
                  <path d="M2 5 Q5 4 8 6.5 L12 7 V9 H2Z" fill="#24506c" />
                </svg>
              </ViewButton>
            </ViewSwitch>
          </StatusBar>
        </Window>

        <Menu>
          {MENU.map((m, i) =>
            m ? (
              <MenuItem key={i} $disabled={m.disabled} $hover={m.hover}>
                <MenuLabel>{m.label}</MenuLabel>
                {m.sub && (
                  <svg width="14" height="14" viewBox="0 0 14 14">
                    <path d="M3 .8 L9.2 7 L3 13.2" fill="none" stroke="#333" strokeWidth="1.1" />
                  </svg>
                )}
              </MenuItem>
            ) : (
              <Separator key={i} />
            )
          )}
        </Menu>

        <Pointer width="47" height="17" viewBox="0 0 47 17">
          <path d="M0 8.6 H26" stroke="#f20000" strokeWidth="2.6" />
          <path d="M23 .8 L46.5 8.3 L23 16Z" fill="#fa0000" />
        </Pointer>
      </Desktop>
    </>
  );
}
